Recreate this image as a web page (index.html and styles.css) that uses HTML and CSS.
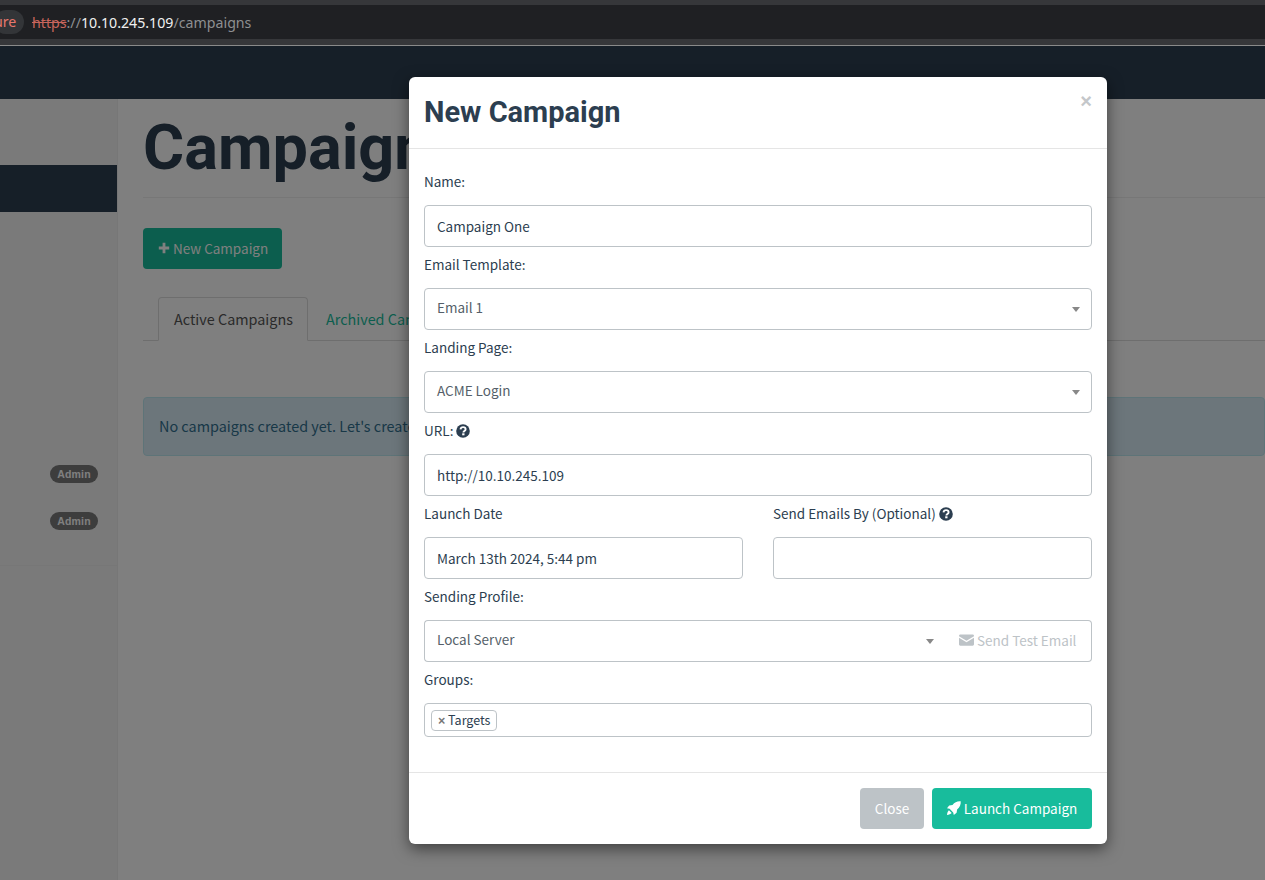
FILE: index.html
```html
<!DOCTYPE html>
<html lang="en">
<head>
<meta charset="utf-8">
<title>Gophish - Campaigns</title>
<link rel="stylesheet" href="styles.css">
</head>
<body>
<div class="chrome">
  <div class="chrome-bar">
    <span class="secure-pill">ure</span>
    <span class="url"><span class="url-https">https</span><span class="url-dim">://</span><span class="url-host">10.10.245.109</span><span class="url-dim">/campaigns</span></span>
  </div>
</div>
<div class="page">
  <header class="navbar"></header>
  <div class="layout">
    <aside class="sidebar">
      <div class="side-active"></div>
      <div class="side-badges">
        <span class="badge">Admin</span>
        <span class="badge">Admin</span>
      </div>
      <div class="side-rule"></div>
    </aside>
    <main class="main">
      <h1 class="page-title">Campaigns</h1>
      <button class="btn-new" type="button">
        <svg class="ico" viewBox="0 0 12 12"><path d="M4.600 0.800h2.800v3.800h3.800v2.800H7.400v3.800H4.600V7.400H0.800V4.600h3.800z"/></svg>
        <span>New Campaign</span>
      </button>
      <div class="tabs">
        <span class="tab tab-on">Active Campaigns</span>
        <span class="tab">Archived Campaigns</span>
      </div>
      <div class="alert">No campaigns created yet. Let's create one!</div>
    </main>
  </div>
  <div class="backdrop"></div>
  <section class="modal">
    <div class="modal-head">
      <h2 class="modal-title">New Campaign</h2>
      <span class="modal-x">×</span>
    </div>
    <div class="modal-body">
      <label class="lbl">Name:</label>
      <div class="field">Campaign One</div>
      <label class="lbl">Email Template:</label>
      <div class="field select">Email 1<i class="caret"></i></div>
      <label class="lbl">Landing Page:</label>
      <div class="field select">ACME Login<i class="caret"></i></div>
      <label class="lbl">URL:
        <svg class="help" viewBox="0 0 14 14"><circle cx="7" cy="7" r="6.800"/><path class="help-q" d="M4.500 5.400C4.700 3.900 5.800 3.100 7.100 3.100c1.400 0 2.500.9 2.500 2.100 0 1.900-2.200 1.800-2.200 3.300"/><rect class="help-dot" x="6.200" y="9.300" width="2.300" height="2"/></svg>
      </label>
      <div class="field">http://10.10.245.109</div>
      <div class="two-col">
        <div>
          <label class="lbl">Launch Date</label>
          <div class="field">March 13th 2024, 5:44 pm</div>
        </div>
        <div>
          <label class="lbl">Send Emails By (Optional)
            <svg class="help" viewBox="0 0 14 14"><circle cx="7" cy="7" r="6.800"/><path class="help-q" d="M4.500 5.400C4.700 3.900 5.800 3.100 7.100 3.100c1.400 0 2.500.9 2.500 2.100 0 1.900-2.200 1.800-2.200 3.300"/><rect class="help-dot" x="6.200" y="9.300" width="2.300" height="2"/></svg>
          </label>
          <div class="field"></div>
        </div>
      </div>
      <label class="lbl">Sending Profile:</label>
      <div class="input-group">
        <div class="field select joined">Local Server<i class="caret"></i></div>
        <button class="btn-test" type="button">
          <svg class="ico-mail" viewBox="0 0 16 12"><path d="M0 1.400C0 .6.600 0 1.400 0h13.200c.8 0 1.400.6 1.400 1.400v.5L8 6.900 0 1.900z"/><path d="M0 3.500l8 5 8-5v7.100c0 .8-.6 1.400-1.400 1.400H1.400C.6 12 0 11.400 0 10.600z"/></svg>
          <span>Send Test Email</span>
        </button>
      </div>
      <label class="lbl">Groups:</label>
      <div class="tags"><span class="tag"><span class="tag-x">×</span> Targets</span></div>
    </div>
    <div class="modal-foot">
      <button class="btn-close" type="button">Close</button>
      <button class="btn-launch" type="button">
        <svg class="ico-rocket" viewBox="0 0 14 14"><path d="M13.700.3c.3 3.300-.8 6-3.600 8.200l-.5 3.300L6.800 14l-.6-2.600-3.600-3.600L0 7.200l2.200-2.800 3.300-.5C7.700 1.100 10.400 0 13.700.3z"/><path d="M1.900 9.300l2.800 2.800C3.600 13.300 2 13.800 0 14c.2-2 .7-3.600 1.900-4.700z"/></svg>
        <span>Launch Campaign</span>
      </button>
    </div>
  </section>
</div>
</body>
</html>
```
FILE: styles.css
```css
* { box-sizing: border-box; }
html, body { margin: 0; padding: 0; height: 100%; overflow: hidden; }
body {
  font-family: "Noto Sans CJK SC", "Source Sans Pro", "Open Sans", sans-serif;
  font-size: 13.500px;
  color: #2c3e50;
  background: #fff;
}
.chrome {
  height: 46px;
  padding: 5px 0 6px;
  background: #36373a;
  border-bottom: 1px solid #8a8a8a;
}
.chrome-bar {
  height: 34px;
  background: #1f2023;
  display: flex;
  align-items: center;
  overflow: hidden;
}
.secure-pill {
  margin-left: -6px;
  width: 30px;
  height: 24px;
  line-height: 24px;
  border-radius: 12px;
  background: #333538;
  color: #e8776c;
  font-family: "Noto Sans", sans-serif;
  font-size: 14.200px;
}
.url {
  margin-left: 8px;
  font-family: "Noto Sans", sans-serif;
  font-size: 14.200px;
  color: #8e8f91;
}
.url-https { color: #c8655c; text-decoration: line-through; }
.url-host { color: #f0f0f0; }
.url-dim { color: #8e8f91; }

.page { position: relative; height: 834px; overflow: hidden; }
.navbar { height: 53px; background: #2c3e50; }
.layout { display: flex; height: 781px; }
.sidebar {
  width: 118px;
  flex: none;
  background: #f5f5f5;
  border-right: 1px solid #eee;
  padding-top: 66px;
}
.side-active { height: 47px; background: #2c3e50; }
.side-badges {
  display: flex;
  flex-direction: column;
  align-items: flex-end;
  gap: 29px;
  padding: 253px 19px 0 0;
}
.badge {
  width: 48px;
  height: 18px;
  line-height: 18px;
  border-radius: 9px;
  background: #7b7b7b;
  color: #fff;
  font-family: "Liberation Sans", sans-serif;
  font-size: 10.500px;
  letter-spacing: .2px;
  font-weight: 700;
  text-align: center;
}
.side-rule { margin-top: 35px; border-top: 1px solid #eee; }

.main { flex: 1; min-width: 0; padding-left: 25px; overflow: hidden; }
.page-title {
  margin: 0 0 30px;
  height: 99px;
  padding-top: 10px;
  border-bottom: 1px solid #eee;
  font-family: Roboto, sans-serif;
  font-size: 63px;
  line-height: 78px;
  font-weight: 700;
  color: #2c3e50;
  white-space: nowrap;
}
.btn-new {
  display: flex;
  align-items: center;
  gap: 3px;
  height: 41px;
  width: 139px;
  padding: 0 15px 2px;
  border: 0;
  border-radius: 4px;
  background: #18bc9c;
  color: #fff;
  font: inherit;
  white-space: nowrap;
  cursor: pointer;
}
.ico { width: 12px; height: 12px; fill: #fff; flex: none; }
.tabs {
  display: flex;
  gap: 3px;
  margin-top: 28px;
  padding-left: 15px;
  height: 44px;
  border-bottom: 1px solid #ddd;
}
.tab {
  height: 44px;
  line-height: 44px;
  padding: 0 15px;
  color: #18bc9c;
  font-size: 14.400px;
  white-space: nowrap;
}
.tab-on {
  color: #555;
  width: 150px;
  border: 1px solid #ddd;
  border-bottom-color: #fff;
  border-radius: 4px 4px 0 0;
  background: #fff;
  line-height: 42px;
}
.alert {
  margin-top: 56px;
  height: 59px;
  line-height: 55px;
  padding-left: 15px;
  border: 1px solid #bce8f1;
  border-radius: 4px;
  background: #d9edf7;
  color: #31708f;
  font-size: 14.400px;
}
.backdrop { position: absolute; inset: 0; background: rgba(0, 0, 0, .5); }

.modal {
  position: absolute;
  left: 409px;
  top: 31px;
  width: 698px;
  height: 767px;
  background: #fff;
  border-radius: 6px;
  box-shadow: 0 5px 15px rgba(0, 0, 0, .5);
}
.modal-head {
  position: relative;
  height: 72px;
  padding: 15px;
  border-bottom: 1px solid #e5e5e5;
}
.modal-title {
  margin: 0;
  font-family: Roboto, sans-serif;
  font-size: 29px;
  line-height: 40px;
  font-weight: 700;
  color: #2c3e50;
}
.modal-x {
  position: absolute;
  right: 15px;
  top: 12px;
  font-family: "Liberation Sans", sans-serif;
  font-size: 20px;
  line-height: 24px;
  font-weight: 700;
  color: #c4c7ca;
}
.modal-body { height: 623px; padding: 20px 15px 0; }
.lbl {
  display: block;
  height: 24px;
  line-height: 24px;
  margin-bottom: 12px;
  white-space: nowrap;
}
.field {
  position: relative;
  height: 42px;
  margin-bottom: 5px;
  padding: 0 12px;
  border: 1px solid #bdc3c7;
  border-radius: 4px;
  background: #fff;
  line-height: 40px;
  color: #2c3e50;
}
.select { color: #555f69; line-height: 36px; }
.caret {
  position: absolute;
  right: 11px;
  top: 18px;
  border: 4px solid transparent;
  border-top: 5px solid #888;
  border-bottom: 0;
}
.help { width: 14px; height: 14px; vertical-align: -2px; }
.help circle { fill: #2c3e50; }
.help-q { fill: none; stroke: #fff; stroke-width: 1.900; }
.help-dot { fill: #fff; }
.two-col { display: grid; grid-template-columns: 319px 319px; column-gap: 30px; }
.input-group { display: flex; height: 42px; margin-bottom: 5px; }
.joined { flex: 1; margin: 0; border-right: 0; border-radius: 4px 0 0 4px; }
.joined .caret { right: 10px; }
.btn-test {
  display: flex;
  align-items: center;
  gap: 3px;
  width: 148px;
  flex: none;
  height: 42px;
  padding: 0 15px 2px;
  border: 1px solid #bdc3c7;
  border-left: 0;
  border-radius: 0 4px 4px 0;
  background: #fff;
  color: #bdc3c7;
  font: inherit;
  white-space: nowrap;
}
.ico-mail { width: 15px; height: 12px; fill: #bdc3c7; flex: none; }
.tags {
  height: 34px;
  padding: 6px;
  border: 1px solid #bdc3c7;
  border-radius: 4px;
  display: flex;
  align-items: flex-start;
}
.tag {
  height: 21px;
  line-height: 18px;
  padding: 0 6px;
  border: 1px solid #bdc3c7;
  border-radius: 4px;
  font-size: 12.500px;
  color: #2c3e50;
  white-space: nowrap;
}
.tag-x { color: #777; font-family: "Liberation Sans", sans-serif; font-weight: 700; }
.modal-foot {
  display: flex;
  justify-content: flex-end;
  gap: 8px;
  padding: 15px;
  height: 72px;
  border-top: 1px solid #e5e5e5;
}
.btn-close, .btn-launch {
  height: 41px;
  border: 0;
  border-radius: 4px;
  color: #fff;
  font: inherit;
  white-space: nowrap;
  padding-bottom: 2px;
}
.btn-close { width: 64px; background: #bdc3c7; }
.btn-launch {
  width: 160px;
  background: #18bc9c;
  display: flex;
  align-items: center;
  justify-content: center;
  gap: 3px;
}
.ico-rocket { width: 14px; height: 14px; fill: #fff; flex: none; }
```
